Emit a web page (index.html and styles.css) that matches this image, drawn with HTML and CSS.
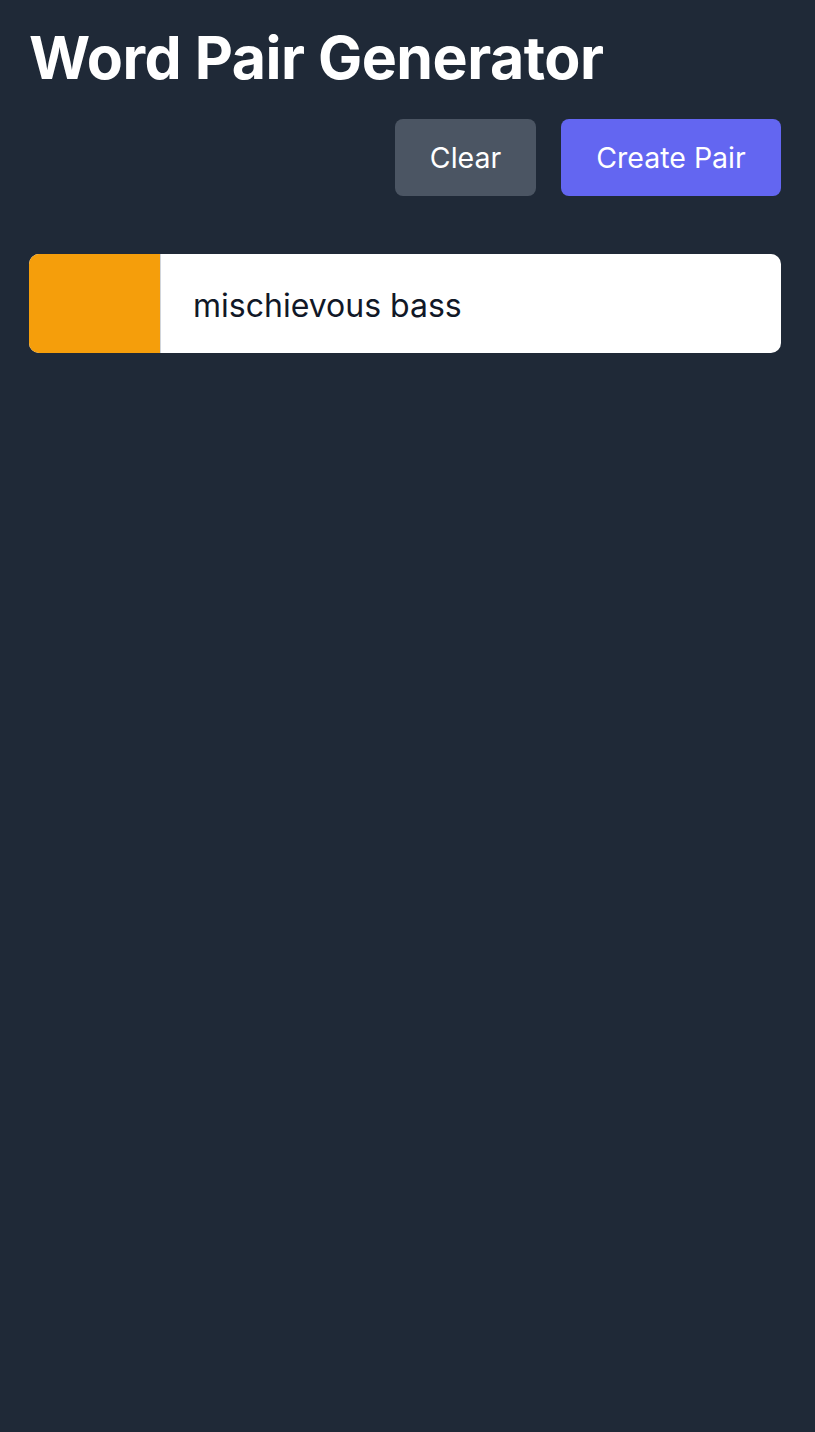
FILE: index.html
```html
<!DOCTYPE html>
<html lang="en">
<head>
<meta charset="utf-8">
<title>Word Pair Generator</title>
<link rel="stylesheet" href="styles.css">
</head>
<body>
<div class="app">
  <h1 class="title">Word Pair Generator</h1>
  <div class="actions">
    <button class="btn btn-clear">Clear</button>
    <button class="btn btn-create">Create Pair</button>
  </div>
  <ul class="pairs">
    <li class="pair">
      <span class="swatch"></span>
      <span class="pair-text">mischievous bass</span>
    </li>
  </ul>
</div>
</body>
</html>
```
FILE: styles.css
```css
html, body {
  margin: 0;
  padding: 0;
  background: #1f2937;
  min-height: 100%;
}
body {
  font-family: Inter, "Noto Sans", sans-serif;
  color: #ffffff;
}
.app {
  padding: 24px 34px 0 29px;
}
.title {
  margin: 0;
  font-size: 59px;
  font-weight: 700;
  line-height: 68px;
  letter-spacing: -0.5px;
}
.actions {
  display: flex;
  justify-content: flex-end;
  gap: 25px;
  margin-top: 27px;
}
.btn {
  font-family: inherit;
  font-size: 28.5px;
  color: #ffffff;
  border: none;
  border-radius: 8px;
  height: 77px;
  padding: 0;
  cursor: pointer;
}
.btn-clear {
  background: #4b5563;
  width: 141px;
}
.btn-create {
  background: #6366f1;
  width: 220px;
}
.pairs {
  list-style: none;
  margin: 58px 0 0;
  padding: 0;
}
.pair {
  display: flex;
  height: 99px;
  background: #ffffff;
  border-radius: 10px;
  overflow: hidden;
}
.swatch {
  width: 131px;
  background: #f59e0b;
  border-right: 1px solid #d1d5db;
}
.pair-text {
  display: flex;
  align-items: center;
  padding: 3px 0 0 32px;
  font-size: 32px;
  color: #111827;
}
```
